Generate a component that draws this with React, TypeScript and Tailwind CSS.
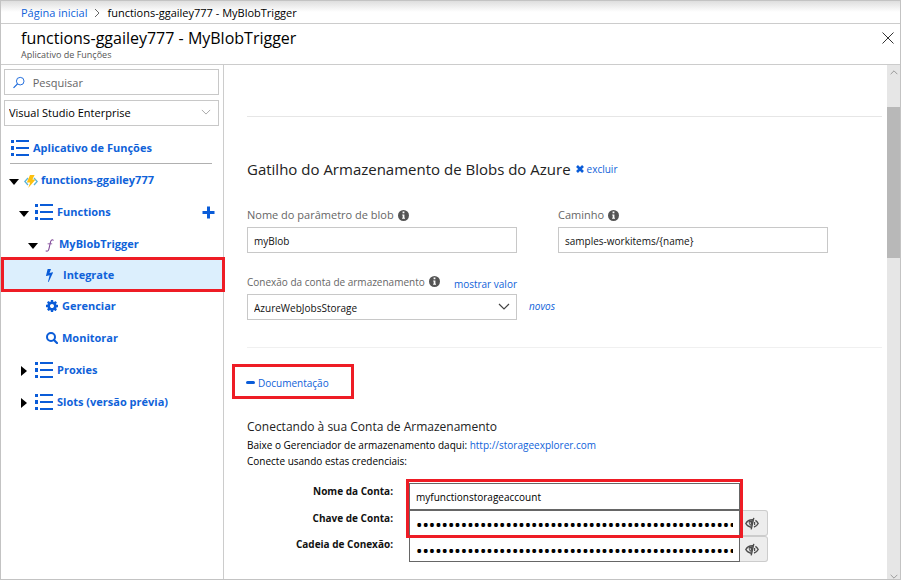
import React from "react";

type IconProps = { className?: string };

const ListIcon = ({ className = "" }: IconProps) => (
  <svg viewBox="0 0 18 16" className={`h-4 w-[18px] shrink-0 ${className}`} fill="#0a5cd8" aria-hidden="true">
    <path d="M0 0h3v3H0zM5 0h13v2H5zM0 6h3v4H0zM5 7h13v2H5zM0 13h3v3H0zM5 14h13v2H5z" />
  </svg>
);

const ArrowDown = ({ className = "" }: IconProps) => (
  <svg viewBox="0 0 10 6" className={`mt-1 h-[6px] w-[10px] shrink-0 ${className}`} aria-hidden="true">
    <path d="M0 0h10L5 6z" />
  </svg>
);

const ArrowRight = ({ className = "" }: IconProps) => (
  <svg viewBox="0 0 6 10" className={`mt-[2px] h-[10px] w-[6px] shrink-0 ${className}`} aria-hidden="true">
    <path d="M0 0v10l6-5z" />
  </svg>
);

const BlobFunctionIcon = () => (
  <svg viewBox="0 0 14 13" className="mt-[2px] h-[13px] w-[14px] shrink-0" aria-hidden="true">
    <path d="M4 3L.8 6.500 4 10M10 3l3.200 3.500L10 10" fill="none" stroke="#59b4d9" strokeWidth="1.300" />
    <path d="M6 0h4.600L8.400 4.600h3.200L4.200 13l2-5.600H2.800z" fill="#fcc010" />
  </svg>
);

const FIcon = () => (
  <svg viewBox="0 0 9 13" className="mt-[2px] h-[13px] w-[9px] shrink-0" fill="none" stroke="#804998" aria-hidden="true">
    <path d="M8.500 1.500C7.400.2 6 .8 5.500 3L4 9.600C3.600 11.800 2.400 12.800.7 11.800" strokeWidth="1.100" />
    <path d="M2.600 4.800h4.600" strokeWidth=".8" />
  </svg>
);

const BoltIcon = () => (
  <svg viewBox="0 0 896 1792" className="h-[14px] w-[7px] shrink-0" fill="#0a5cd8" aria-hidden="true">
    <path d="M885 566q18 20 7 44l-540 1157q-13 25-42 25-4 0-14-2-17-5-25.500-19t-4.500-30l197-808-406 101q-4 1-12 1-18 0-31-11-18-15-13-39l201-825q4-16 18-26t32-10h328q19 0 32 12.500t13 29.500q0 8-5 18l-171 463 396-98q8-2 12-2 19 0 34 15z" />
  </svg>
);

const GearIcon = () => (
  <svg viewBox="0 0 1536 1536" className="h-3 w-3 shrink-0" fill="#0a5cd8" aria-hidden="true">
    <path d="M1024 768q0-106-75-181t-181-75-181 75-75 181 75 181 181 75 181-75 75-181zm512-109v222q0 12-8 23t-20 13l-185 28q-19 54-39 91 35 50 107 138 10 12 10 25t-9 23q-27 37-99 108t-94 71q-12 0-26-9l-138-108q-44 23-91 38-16 136-29 186-7 28-36 28H657q-14 0-24.500-8.500T621 1506l-28-184q-49-16-90-37l-141 107q-10 9-25 9-14 0-25-11-126-114-165-168-7-10-7-23 0-12 8-23 15-21 51-66.500t54-70.500q-27-50-41-99L29 913q-13-2-21-12.500T0 877V655q0-12 8-23t19-13l186-28q14-46 39-92-40-57-107-138-10-12-10-24 0-10 9-23 26-36 98.500-107.500T337 135q13 0 26 10l138 107q44-23 91-38 16-136 29-186 7-28 36-28h222q14 0 24.500 8.500T915 30l28 184q49 16 90 37l142-107q9-9 24-9 13 0 25 10 129 119 165 170 7 8 7 22 0 12-8 23-15 21-51 66.500t-54 70.500q26 50 41 98l183 28q13 2 21 12.500t8 23.500z" />
  </svg>
);

const MagnifierIcon = () => (
  <svg viewBox="0 0 12 12" className="h-3 w-3 shrink-0" fill="none" stroke="#0a5cd8" aria-hidden="true">
    <circle cx="5" cy="5" r="4" strokeWidth="2" />
    <path d="M8 8l3 3" strokeWidth="2.200" strokeLinecap="round" />
  </svg>
);

const InfoIcon = () => (
  <svg viewBox="0 0 11 11" className="h-[11px] w-[11px] shrink-0" aria-hidden="true">
    <circle cx="5.500" cy="5.500" r="5.500" fill="#555" />
    <path d="M4.600 1.600h1.800v1.600H4.600zM4.200 4.400h2.200v3.400h.6v1H4.100v-1h.6V5.400h-.5z" fill="#fff" />
  </svg>
);

const EyeIcon = () => (
  <svg viewBox="0 0 14 13" className="h-[13px] w-[14px]" fill="none" stroke="#4d4d4d" aria-hidden="true">
    <path d="M6 10.200C3.500 9.800 1.800 8.400.8 6.500 2.200 4 4.500 2.600 8 2.800" strokeWidth="1.400" />
    <path d="M8.800.8L6.200 12.400" strokeWidth="1.400" />
    <path d="M10.400 3.400c1.300.8 2.200 1.900 2.800 3.100-.9 1.700-2.300 2.900-4.200 3.500" strokeWidth="1.400" />
    <path d="M3.800 4.200L8 3 6.600 9C4.500 8.600 3.300 6.500 3.800 4.200z" fill="#4d4d4d" stroke="none" />
    <path d="M5.200 5.200c-.2 1 .2 1.800.9 2.200" stroke="#ededed" strokeWidth="1" />
    <path d="M9.600 5v3" strokeWidth="1.200" />
  </svg>
);

const Chevron = ({ className = "" }: IconProps) => (
  <svg viewBox="0 0 12 7" className={className} fill="none" stroke="currentColor" aria-hidden="true">
    <path d="M1 1l5 5 5-5" strokeWidth="1.200" />
  </svg>
);

type RowProps = {
  label: string;
  pad: string;
  gap?: string;
  arrow?: React.ReactNode;
  icon: React.ReactNode;
  active?: boolean;
  action?: React.ReactNode;
};

const TreeRow = ({ label, pad, gap = "gap-1", arrow, icon, active, action }: RowProps) => (
  <li className={`relative flex items-center ${active ? "h-[30px]" : "h-8"} ${pad}`}>
    {active && <span className="absolute -top-[3px] -right-[2px] -bottom-[2px] left-0 z-10 border-3 border-[#ee1c25] bg-[#dceffd]" />}
    <button type="button" className={`relative z-20 flex items-center ${gap} font-bold text-[#0f62d9]`}>
      {arrow}
      {icon}
      <span>{label}</span>
    </button>
    {action}
  </li>
);

type FieldProps = { id: string; label: string; value: string };

const Field = ({ id, label, value }: FieldProps) => (
  <div className="w-[270px]">
    <div className="flex h-6 items-center gap-1 text-[#666]">
      <label htmlFor={id}>{label}</label>
      <InfoIcon />
    </div>
    <input id={id} defaultValue={value} className="h-[26px] w-full border border-[#c8c8c8] bg-white px-[6px] pt-[2px] text-[10px] text-[#111] outline-none" />
  </div>
);

type CredentialProps = { id: string; label: string; value: string; secret?: boolean };

const Credential = ({ id, label, value, secret }: CredentialProps) => (
  <div className="flex items-start text-[10px]">
    <label htmlFor={id} className="w-[162px] pr-4 text-right font-bold text-[#111]">
      {label}
    </label>
    <input
      id={id}
      type={secret ? "password" : "text"}
      defaultValue={value}
      className={`w-[331px] border border-[#666] bg-white px-[6px] outline-none ${secret ? "h-[26px] pt-[2px] font-['Noto_Sans',sans-serif] text-[17px]" : "h-[27px]"}`}
    />
    {secret && (
      <button type="button" aria-label={`Mostrar ${label}`} className="flex h-[26px] w-7 items-center justify-center rounded-r-[3px] border border-l-0 border-[#ccc] bg-[#ededed] pr-1">
        <EyeIcon />
      </button>
    )}
  </div>
);

const SECRET = "x".repeat(80);

export default function App() {
  return (
    <div className="flex min-h-screen flex-col border border-[#c3c3c3] bg-white font-['Open_Sans','Noto_Sans',sans-serif] text-[11px] leading-4 text-black">
      <nav className="flex h-[23px] items-center gap-[7px] border-b border-[#ccc] bg-linear-to-b from-[#dedede] to-white to-50% pt-[2px] pl-5">
        <a href="#" className="text-[#0f62d9]">Página inicial</a>
        <svg viewBox="0 0 6 8" className="h-2 w-[6px]" fill="none" stroke="#666" aria-hidden="true">
          <path d="M1 0l4 4-4 4" />
        </svg>
        <span>functions-ggailey777 - MyBlobTrigger</span>
      </nav>
      <header className="flex h-[41px] items-start justify-between border-b border-[#ccc] pr-[6px] pl-5">
        <div>
          <h1 className="mt-[3px] text-[16px] leading-[22px]">functions-ggailey777 - MyBlobTrigger</h1>
          <p className="text-[9px] leading-3 text-[#555]">Aplicativo de Funções</p>
        </div>
        <button type="button" aria-label="Fechar" className="mt-2">
          <svg viewBox="0 0 12 12" className="h-3 w-3" stroke="#333" aria-hidden="true">
            <path d="M.5.5l11 11M11.500.5l-11 11" />
          </svg>
        </button>
      </header>

      <div className="flex grow">
        <aside className="w-[223px] shrink-0 border-r border-[#ccc] pt-1">
          <label className="mr-1 ml-[3px] flex h-[26px] items-center gap-2 border border-[#c8c8c8] pl-2">
            <svg viewBox="0 0 13 13" className="h-[13px] w-[13px]" fill="none" stroke="#0f62d9" aria-hidden="true">
              <circle cx="8" cy="5" r="4.200" />
              <path d="M5 8L.6 12.400" strokeWidth="1.300" />
            </svg>
            <input aria-label="Pesquisar" placeholder="Pesquisar" className="w-full min-w-0 pt-[2px] outline-none placeholder:text-[#666]" />
          </label>
          <div className="relative mt-[5px] mr-1 ml-[3px]">
            <select aria-label="Assinatura" className="h-[26px] w-full appearance-none border border-[#c8c8c8] bg-white pl-1 outline-none">
              <option>Visual Studio Enterprise</option>
            </select>
            <Chevron className="pointer-events-none absolute top-[9px] right-2 h-[6px] w-[10px] text-[#aaa]" />
          </div>
          <div className="mr-[11px] ml-[9px] flex h-[38px] items-center gap-1 border-b border-[#b0b0b0] pt-[6px] pl-[1px] font-bold text-[#0f62d9]">
            <ListIcon />
            <span>Aplicativo de Funções</span>
          </div>
          <ul>
            <TreeRow label="functions-ggailey777" pad="pl-2" gap="gap-[3px]" arrow={<ArrowDown className="mr-[2px]" />} icon={<BlobFunctionIcon />} />
            <TreeRow
              label="Functions"
              pad="justify-between pr-2 pl-[18px]"
              arrow={<ArrowDown className="mr-[2px]" />}
              icon={<ListIcon />}
              action={
                <button type="button" aria-label="Nova função">
                  <svg viewBox="0 0 13 13" className="h-[13px] w-[13px]" fill="#0a5cd8" aria-hidden="true">
                    <path d="M5 .5h3V5h4.500v3H8v4.500H5V8H.5V5H5z" />
                  </svg>
                </button>
              }
            />
            <TreeRow label="MyBlobTrigger" pad="pl-[27px]" gap="gap-[5px]" arrow={<ArrowDown className="mr-[2px]" />} icon={<FIcon />} />
            <TreeRow label="Integrate" pad="pl-[45px]" gap="gap-[10px]" icon={<BoltIcon />} active />
            <TreeRow label="Gerenciar" pad="pl-[45px]" icon={<GearIcon />} />
            <TreeRow label="Monitorar" pad="pl-[45px]" icon={<MagnifierIcon />} />
            <TreeRow label="Proxies" pad="pl-5" arrow={<ArrowRight className="mr-1" />} icon={<ListIcon />} />
            <TreeRow label="Slots (versão prévia)" pad="pl-5" arrow={<ArrowRight className="mr-1" />} icon={<ListIcon />} />
          </ul>
        </aside>

        <main className="min-w-0 grow pr-[5px] pl-[23px]">
          <hr className="mt-[51px] border-[#e6e6e6]" />
          <div className="mt-10 flex h-6 items-center gap-[5px]">
            <h2 className="text-[15px] leading-6 text-[#222]">Gatilho do Armazenamento de Blobs do Azure</h2>
            <button type="button" className="flex items-center gap-[3px] text-[10px] text-[#0f62d9]">
              <svg viewBox="0 0 8 8" className="h-2 w-2" stroke="#0a5cd8" strokeWidth="2.600" aria-hidden="true">
                <path d="M1 1l6 6M7 1L1 7" />
              </svg>
              excluir
            </button>
          </div>
          <div className="mt-[22px] flex gap-[41px]">
            <Field id="blob" label="Nome do parâmetro de blob" value="myBlob" />
            <Field id="path" label="Caminho" value="samples-workitems/{name}" />
          </div>
          <div className="mt-4 flex items-end gap-3 text-[10px]">
            <div className="w-[270px]">
              <div className="flex h-[25px] items-center gap-1 whitespace-nowrap text-[#666]">
                <label htmlFor="conn">Conexão da conta de armazenamento</label>
                <InfoIcon />
                <a href="#" className="ml-auto pt-1 text-[#0f62d9]">mostrar valor</a>
              </div>
              <div className="relative">
                <select id="conn" className="h-[26px] w-full appearance-none border border-[#c8c8c8] bg-white px-[6px] pt-[2px] text-[#111] outline-none">
                  <option>AzureWebJobsStorage</option>
                </select>
                <Chevron className="pointer-events-none absolute top-[9px] right-[7px] h-[7px] w-3 text-[#444]" />
              </div>
            </div>
            <a href="#" className="mb-[6px] text-[#0f62d9] italic">novos</a>
          </div>
          <hr className="mt-[27px] border-[#f0f0f0]" />
          <button type="button" className="mt-4 -ml-[15px] flex h-[35px] w-[122px] items-center gap-[3px] border-3 border-[#ee1c25] pt-[2px] pl-[11px] text-[10px] text-[#0f62d9]">
            <span className="h-[3px] w-[9px] rounded-xs bg-[#0a5cd8]" />
            Documentação
          </button>
          <h3 className="mt-[18px] text-[12px] leading-5 text-[#222]">Conectando à sua Conta de Armazenamento</h3>
          <div className="text-[10px]">
            <p>
              Baixe o Gerenciador de armazenamento daqui: <a href="#" className="text-[#0f62d9]">http://storageexplorer.com</a>
            </p>
            <p>Conecte usando estas credenciais:</p>
          </div>

          <div className="relative mt-[14px] mb-4 flex flex-col">
            <Credential id="account" label="Nome da Conta:" value="myfunctionstorageaccount" />
            <Credential id="key" label="Chave de Conta:" value={SECRET} secret />
            <Credential id="string" label="Cadeia de Conexão:" value={SECRET} secret />
            <span className="pointer-events-none absolute -top-1 left-[159px] h-[59px] w-[337px] border-3 border-[#ee1c25]" />
          </div>
        </main>

        <div className="flex w-[13px] shrink-0 flex-col items-center bg-[#e6e6e6] text-[#888]" aria-hidden="true">
          <Chevron className="my-[5px] h-[5px] w-2 rotate-180" />
          <div className="mt-[27px] h-[151px] w-full bg-[#b8b8b8]" />
          <Chevron className="mt-auto h-[5px] w-2" />
        </div>
      </div>
    </div>
  );
}
